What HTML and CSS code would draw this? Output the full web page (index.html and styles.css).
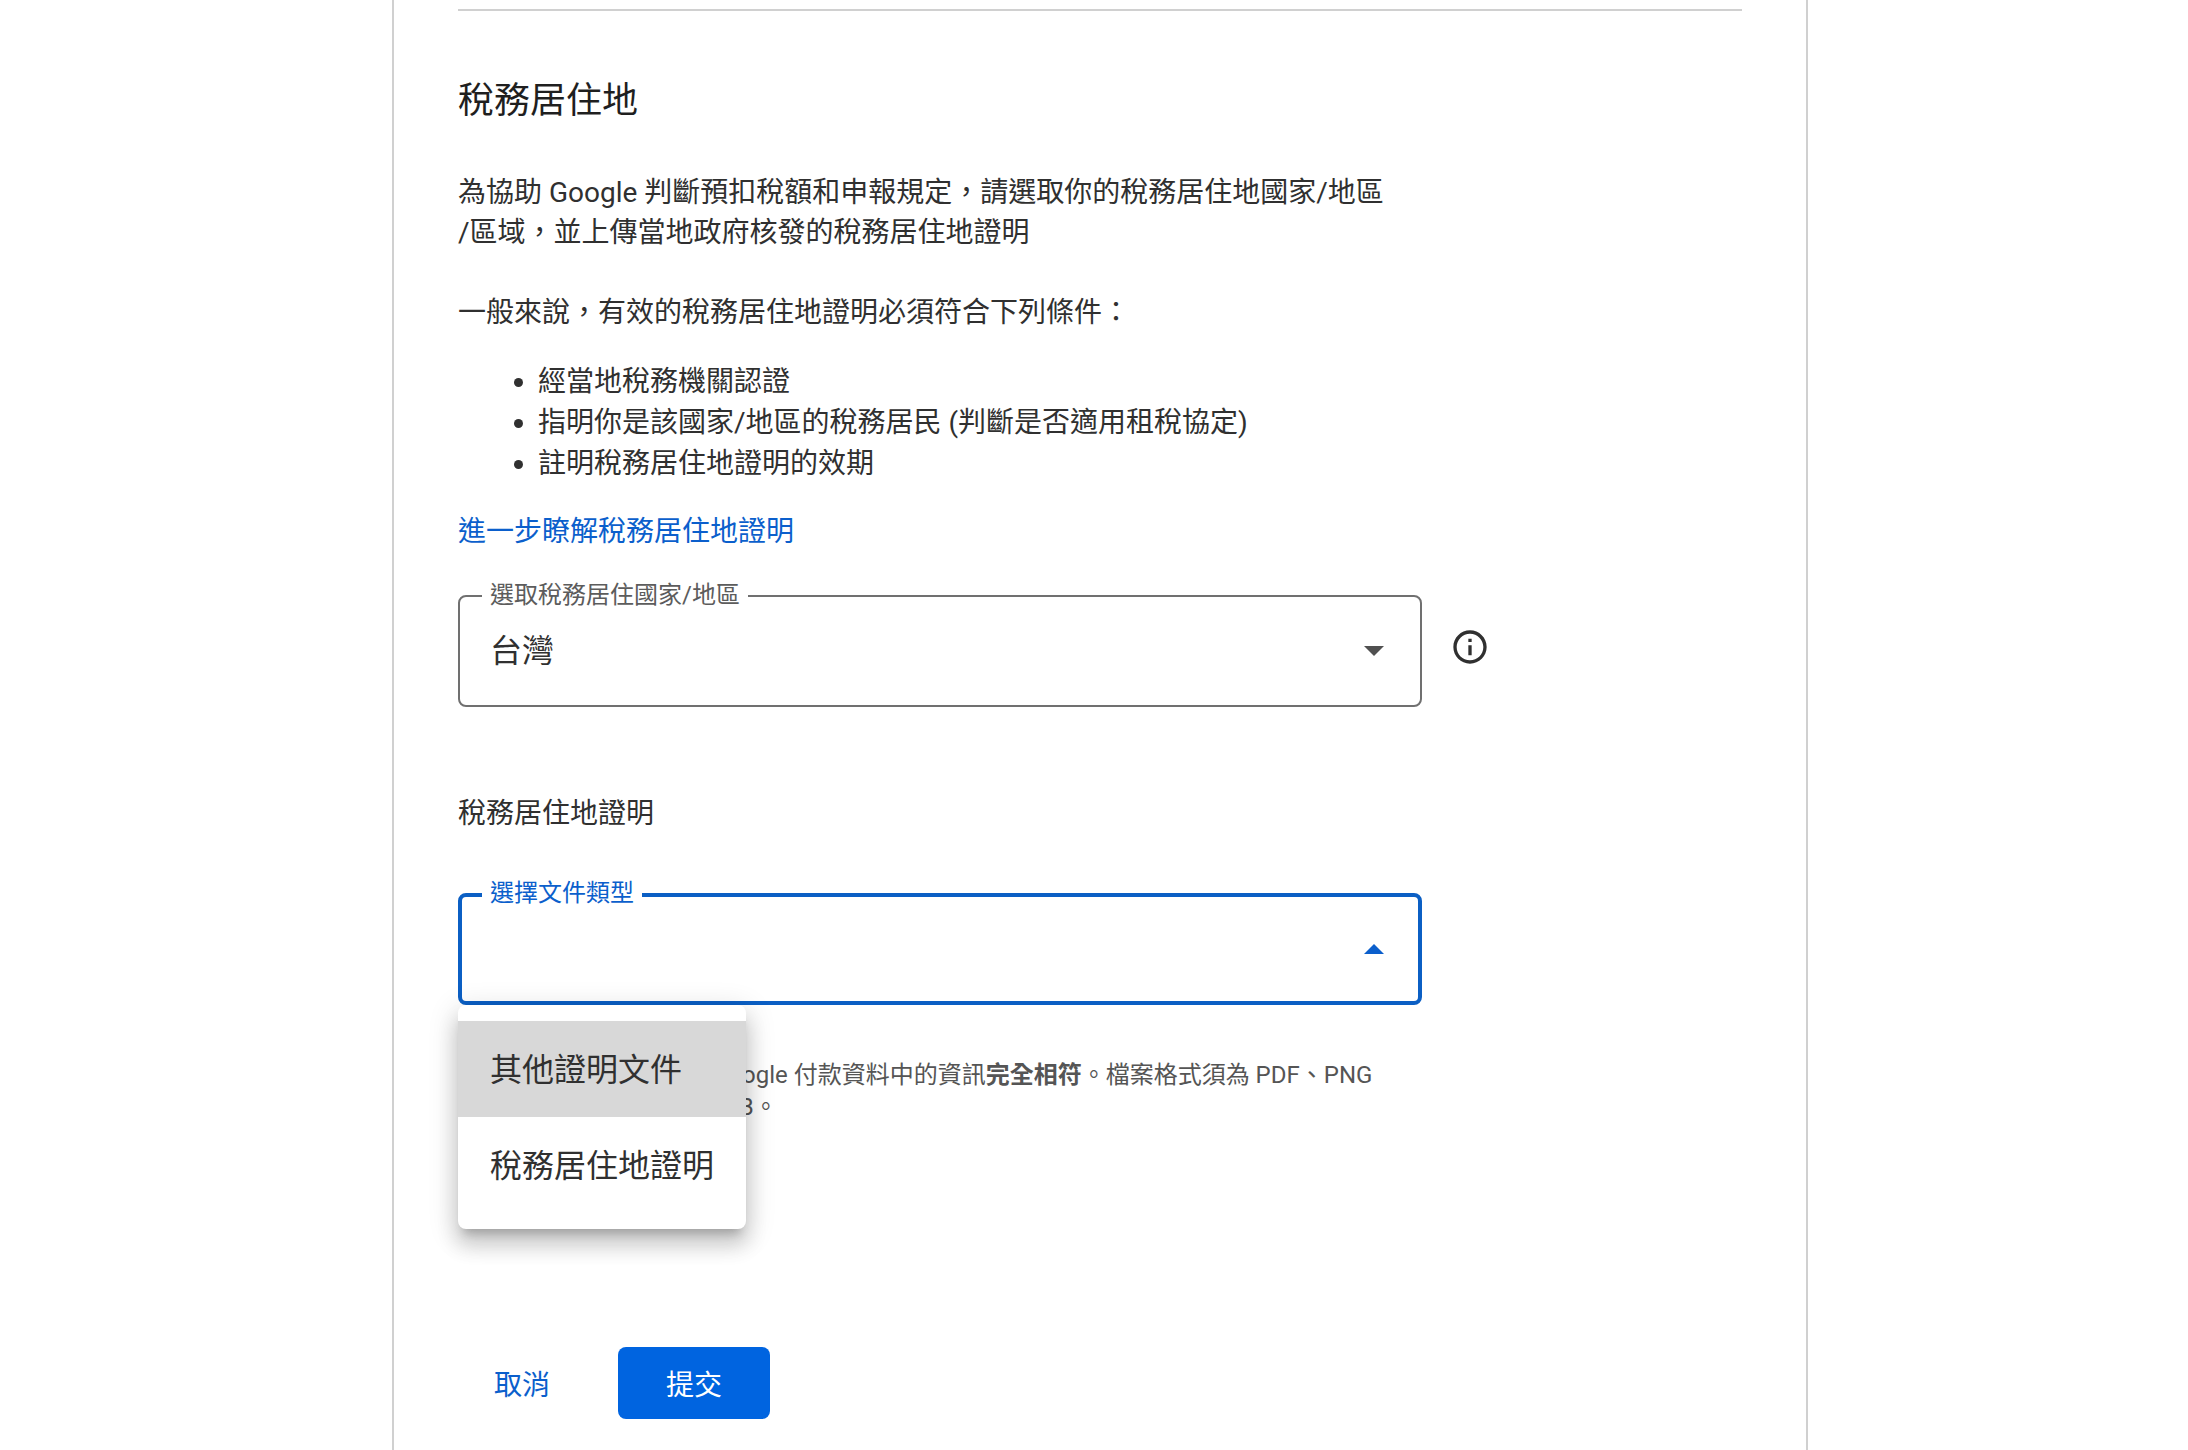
FILE: index.html
```html
<!DOCTYPE html>
<html lang="zh-Hant">
<head>
<meta charset="UTF-8" />
<meta name="viewport" content="width=device-width, initial-scale=1" />
<title>稅務居住地</title>
<link rel="stylesheet" href="styles.css">
</head>
<body>

<main class="card">
  <hr class="divider" />

  <h2>稅務居住地</h2>

  <div class="content">
    <p>為協助 Google 判斷預扣稅額和申報規定，請選取你的稅務居住地國家/地區<br />/區域，並上傳當地政府核發的稅務居住地證明</p>
    <p>一般來說，有效的稅務居住地證明必須符合下列條件：</p>

    <ul class="rules">
      <li>經當地稅務機關認證</li>
      <li>指明你是該國家/地區的稅務居民 (判斷是否適用租稅協定)</li>
      <li>註明稅務居住地證明的效期</li>
    </ul>

    <a class="more" href="#">進一步瞭解稅務居住地證明</a>
  </div>

  <form>
    <div class="row">
      <div class="field">
        <label for="country">選取稅務居住國家/地區</label>
        <select id="country" name="country">
          <option selected>台灣</option>
        </select>
        <svg class="arrow" viewBox="0 0 20 10" aria-hidden="true"><path d="M0 0h20L10 10z"/></svg>
      </div>
      <button type="button" class="info" aria-label="說明">
        <svg viewBox="0 0 24 24" aria-hidden="true"><path d="M11 7h2v2h-2zm0 4h2v6h-2zm1-9C6.48 2 2 6.48 2 12s4.48 10 10 10 10-4.48 10-10S17.52 2 12 2zm0 18c-4.41 0-8-3.59-8-8s3.59-8 8-8 8 3.59 8 8-3.59 8-8 8z"/></svg>
      </button>
    </div>

    <h3>稅務居住地證明</h3>

    <div class="field active">
      <label for="docType">選擇文件類型</label>
      <select id="docType" name="docType">
        <option value="" selected></option>
      </select>
      <svg class="arrow" viewBox="0 0 20 10" aria-hidden="true"><path d="M0 10h20L10 0z"/></svg>
      <!-- 展開的選單，蓋在說明文字上 -->
      <div class="menu">
        <button type="button" class="selected">其他證明文件</button>
        <button type="button">稅務居住地證明</button>
      </div>
    </div>

    <p class="hint">文件內容必須與你的 Google 付款資料中的資訊<b>完全相符</b>。檔案格式須為 PDF、PNG 或 JPEG，大小上限 5MB。</p>

    <div class="actions">
      <button type="button" class="cancel">取消</button>
      <button type="submit" class="submit">提交</button>
    </div>
  </form>
</main>

</body>
</html>
```
FILE: styles.css
```css
* {
  box-sizing: border-box;
}
body {
  margin: 0;
  padding-left: 12px;
  background-color: #fff;
  color: #303030;
  font-family: Roboto, "Noto Sans CJK TC", sans-serif;
  font-size: 28px;
  line-height: 40px;
}
button, select {
  font-family: inherit;
  font-size: inherit;
  color: inherit;
  border: none;
  background: none;
  cursor: pointer;
}
.card {
  max-width: 1416px;
  min-height: 100vh;
  margin: 0 auto;
  padding: 9px 64px 31px;
  border: solid #d0d0d0;
  border-width: 0 2px;
}
.divider {
  height: 2px;
  margin: 0;
  border: none;
  background-color: #d0d0d0;
}
h2 {
  margin: 66px 0 48px;
  color: #1f1f1f;
  font-size: 36px;
  font-weight: 400;
  line-height: 48px;
}
p {
  margin: 0 0 40px;
}
.rules {
  margin: -12px 0 28px;
  padding-left: 80px;
  line-height: 41px;
}
.more {
  color: #0b5fcc;
  text-decoration: none;
}
.row {
  display: flex;
  align-items: center;
  gap: 28px;
  margin-top: 43px;
}
.field {
  position: relative;
  width: 100%;
  max-width: 964px;
}
.field label {
  position: absolute;
  top: -16px;
  left: 24px;
  padding: 0 8px;
  background-color: #fff;
  color: #5c5c5c;
  font-size: 24px;
  line-height: 32px;
}
.field select {
  display: block;
  width: 100%;
  height: 112px;
  padding: 0 80px 0 30px;
  border: 2px solid #707070;
  border-radius: 8px;
  font-size: 32px;
  appearance: none;
  outline: none;
}
.arrow {
  position: absolute;
  top: 51px;
  right: 38px;
  width: 20px;
  height: 10px;
  fill: #505050;
  pointer-events: none;
}
.active label {
  color: #0b5fcc;
}
.active select {
  border: 4px solid #0b5fc4;
}
.active .arrow {
  fill: #0b5fcc;
}
.info {
  flex: none;
  height: 40px;
  margin-top: -8px;
  padding: 0;
}
.info svg {
  display: block;
  width: 40px;
  height: 40px;
  fill: #303030;
}
h3 {
  margin: 87px 0 59px;
  font-size: 28px;
  font-weight: 400;
}
.menu {
  position: absolute;
  top: 100%;
  left: 0;
  z-index: 1;
  padding: 16px 0;
  border-radius: 8px;
  background-color: #fff;
  box-shadow: 0 10px 10px -6px rgba(0, 0, 0, 0.2),
    0 16px 20px 2px rgba(0, 0, 0, 0.14),
    0 6px 28px 4px rgba(0, 0, 0, 0.12);
}
.menu button {
  display: block;
  width: 100%;
  height: 96px;
  padding: 0 32px 4px;
  font-size: 32px;
  text-align: left;
  white-space: nowrap;
}
.menu .selected {
  background-color: #d8d8d8;
}
.hint {
  max-width: 964px;
  margin: 54px 0 0;
  padding: 0 32px;
  color: #555;
  font-size: 24px;
  line-height: 32px;
}
.actions {
  display: flex;
  gap: 32px;
  margin-top: 224px;
}
.actions button {
  height: 72px;
  border-radius: 8px;
}
.cancel {
  padding: 0 36px;
  color: #0b5fcc;
}
.submit {
  padding: 0 48px;
  background-color: #0064e0;
  color: #fff;
}
```
